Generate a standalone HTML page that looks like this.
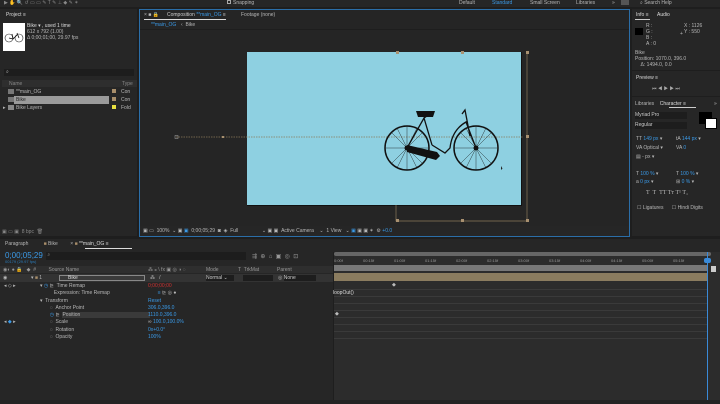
<!DOCTYPE html><html><head><style>
*{margin:0;padding:0;box-sizing:border-box}
body{width:720px;height:404px;background:#1e1e1e;position:relative;overflow:hidden;font-family:"Liberation Sans",sans-serif;font-size:5px;color:#b8b8b8}
.a{position:absolute}
.p{position:absolute;background:#262626}
.b{color:#3a9ae8}
.ln{position:absolute;height:1px;background:#3a3a3a}
</style></head><body>
<!-- top toolbar -->
<div class="a" style="left:0;top:0;width:720px;height:7px;background:#262626"></div>
<div class="a" style="left:4;top:0;left:4px;width:170px;height:6px;color:#888;font-size:5px">▶ ✋ 🔍 ↺ ▭ ▭ ✎ T ✎ ⊥ ◆ ✎ ✶</div>
<div class="a" style="left:227px;top:0;width:4px;height:4px;border:1px solid #aaa"></div>
<div class="a" style="left:233px;top:0">Snapping</div>
<div class="a" style="left:459px;top:0">Default</div>
<div class="a b" style="left:492px;top:0">Standard</div>
<div class="a" style="left:530px;top:0">Small Screen</div>
<div class="a" style="left:576px;top:0">Libraries</div>
<div class="a" style="left:612px;top:0">»</div>
<div class="a" style="left:621px;top:0;width:8px;height:5px;background:#555"></div>
<div class="a" style="left:640px;top:0">⌕ Search Help</div>

<!-- project panel -->
<div class="p" style="left:0;top:9px;width:137px;height:227px"></div>
<div class="a" style="left:6px;top:12px;color:#ddd">Project ≡</div>
<div class="a" style="left:3px;top:23px;width:22px;height:28px;background:#fff"></div>
<svg class="a" style="left:4px;top:31px" width="20" height="12" viewBox="0 0 20 12"><circle cx="5" cy="7" r="4" fill="none" stroke="#222" stroke-width=".6"/><circle cx="15" cy="7" r="4" fill="none" stroke="#222" stroke-width=".6"/><path d="M5 7L9 8L13 4M8 3L9 8M13 2L15 7" stroke="#111" stroke-width=".8" fill="none"/></svg>
<div class="a" style="left:27px;top:23px;color:#ddd">Bike ▾ , used 1 time</div>
<div class="a" style="left:27px;top:29px">612 x 792 (1.00)</div>
<div class="a" style="left:27px;top:35px">Δ 0;00;01;00, 29.97 fps</div>
<div class="a" style="left:4px;top:69px;width:130px;height:7px;background:#1d1d1d"></div>
<div class="a" style="left:6px;top:69px">⌕</div>
<div class="a" style="left:2px;top:80px;width:135px;height:7px;background:#2e2e2e"></div>
<div class="a" style="left:9px;top:81px;color:#888">Name</div>
<div class="a" style="left:122px;top:81px;color:#888">Type</div>
<div class="a" style="left:8px;top:89px;width:6px;height:5px;background:#777"></div><div class="a" style="left:16px;top:89px">**main_OG</div>
<div class="a" style="left:112px;top:89px;width:4px;height:4px;background:#a88e6a"></div><div class="a" style="left:121px;top:89px">Con</div>
<div class="a" style="left:14px;top:96px;width:95px;height:8px;background:#9a9a9a"></div>
<div class="a" style="left:8px;top:97px;width:6px;height:5px;background:#777"></div><div class="a" style="left:16px;top:97px;color:#222">Bike</div>
<div class="a" style="left:112px;top:97px;width:4px;height:4px;background:#a88e6a"></div><div class="a" style="left:121px;top:97px">Con</div>
<div class="a" style="left:3px;top:105px">▸</div><div class="a" style="left:8px;top:105px;width:6px;height:5px;background:#888"></div><div class="a" style="left:16px;top:105px">Bike Layers</div>
<div class="a" style="left:112px;top:105px;width:4px;height:4px;background:#e8e040"></div><div class="a" style="left:121px;top:105px">Fold</div>
<div class="a" style="left:2px;top:229px;color:#888">▣ ▭ ▣ &nbsp;8 bpc &nbsp;🗑</div>

<!-- comp panel -->
<div class="a" style="left:139px;top:9px;width:491px;height:228px;background:#252525;border:1px solid #2b6ea8"></div>
<div class="a" style="left:144px;top:12px">× ■ 🔒</div>
<div class="a" style="left:167px;top:12px;color:#ccc">Composition <span class="b">**main_OG</span> ≡</div>
<div class="a" style="left:144px;top:19px;width:82px;height:1px;background:#ddd"></div>
<div class="a" style="left:241px;top:12px">Footage (none)</div>
<div class="a b" style="left:151px;top:22px">**main_OG</div><div class="a" style="left:181px;top:22px">‹ &nbsp;Bike</div>
<div class="a" style="left:140px;top:29px;width:489px;height:1px;background:#1e1e1e"></div>
<!-- canvas -->
<div class="a" style="left:247px;top:52px;width:275px;height:154px;background:#8ed0e1;border-right:1px solid #111;border-bottom:1px solid #111"></div>
<svg class="a" style="left:140px;top:40px" width="400" height="190" viewBox="140 40 400 190">
<g fill="none" stroke="#8a7a5a" stroke-width=".7">
<path d="M176 137H523" stroke-dasharray="1.5 1"/>
<path d="M527 52V221H396V205"/>
</g>
<g fill="#a89070"><rect x="396" y="51" width="3" height="3"/><rect x="461" y="51" width="3" height="3"/><rect x="526" y="51" width="3" height="3"/><rect x="526" y="135" width="3" height="3"/><rect x="526" y="219" width="3" height="3"/><rect x="461" y="219" width="3" height="3"/><rect x="396" y="219" width="3" height="3"/><rect x="222" y="136" width="2" height="2"/></g>
<rect x="175" y="135.5" width="3" height="3" fill="none" stroke="#aaa" stroke-width=".5"/>
<g stroke="#111" fill="none">
<circle cx="407" cy="148" r="22" stroke-width="1.5"/><circle cx="476" cy="148" r="22" stroke-width="1.5"/>
<g stroke-width=".4"><path d="M385 148H429M407 126V170M391 132L423 164M423 132L391 164M454 148H498M476 126V170M460 132L492 164M492 132L460 164M397 128L417 168M417 128L397 168M466 128L486 168M486 128L466 168"/></g>
<path d="M407 148L424 118L432 145M424 118L430 114M432 145L445 153L450 148Q452 130 466 122L476 148M462 114L465 110L470 136" stroke-width="1.3"/>
</g>
<path d="M416 111H435L433 117H418Z" fill="#111"/>
<path d="M407 145L437 152L440 156L436 160L407 152Z" fill="#111"/>
<circle cx="407" cy="148" r="2.5" fill="#111"/><circle cx="476" cy="148" r="2.5" fill="#111"/>
<path d="M501 166l0 4l1.5-1.5z" fill="#222"/>
</svg>
<div class="a" style="left:140px;top:226px;width:489px;height:10px;background:#262626"></div>
<div class="a" style="left:143px;top:228px">▣ ▭ &nbsp;100% &nbsp;⌄ ▣ <span class="b">▣</span> &nbsp;0;00;05;29 &nbsp;◙ &nbsp;◈ &nbsp;Full &nbsp;&nbsp;&nbsp;&nbsp;&nbsp;&nbsp;&nbsp;&nbsp;&nbsp;&nbsp;&nbsp;&nbsp;&nbsp;&nbsp;&nbsp;&nbsp;⌄ ▣ ▣ &nbsp;Active Camera &nbsp;&nbsp;&nbsp;⌄ &nbsp;1 View &nbsp;&nbsp;⌄ <span class="b">▣</span> ▣ ▣ ✶ &nbsp;⚙ <span class="b">+0.0</span></div>

<!-- right panel -->
<div class="p" style="left:632px;top:9px;width:88px;height:227px"></div>
<div class="a" style="left:636px;top:12px;color:#ddd">Info ≡ &nbsp;&nbsp;&nbsp;&nbsp;&nbsp;Audio</div>
<div class="a" style="left:635px;top:19px;width:15px;height:1px;background:#ccc"></div>
<div class="a" style="left:635px;top:28px;width:8px;height:7px;background:#000"></div>
<div class="a" style="left:646px;top:23px;line-height:6px">R :<br>G :<br>B :<br>A : 0</div>
<div class="a" style="left:684px;top:23px;line-height:6px">X : 1126<br>Y : 550</div>
<div class="a" style="left:680px;top:31px">+</div>
<div class="a" style="left:635px;top:50px;line-height:6px">Bike<br>Position: 1070.0, 396.0<br>&nbsp;&nbsp;&nbsp;&nbsp;Δ: 1494.0, 0.0</div>
<div class="a" style="left:632px;top:70px;width:88px;height:1px;background:#1e1e1e"></div>
<div class="a" style="left:636px;top:75px;color:#ddd">Preview ≡</div>
<div class="a" style="left:652px;top:86px;color:#aaa">⏮ ◀ ▶ ▶ ⏭</div>
<div class="a" style="left:632px;top:96px;width:88px;height:1px;background:#1e1e1e"></div>
<div class="a" style="left:635px;top:101px">Libraries &nbsp;&nbsp;&nbsp;<span style="color:#ddd">Character ≡</span></div>
<div class="a" style="left:669px;top:107px;width:27px;height:1px;background:#ccc"></div>
<div class="a" style="left:714px;top:101px">»</div>
<div class="a" style="left:635px;top:112px;width:52px;height:7px;background:#1d1d1d;color:#ccc">Myriad Pro</div>
<div class="a" style="left:635px;top:122px;width:52px;height:7px;background:#1d1d1d;color:#ccc">Regular</div>
<div class="a" style="left:699px;top:112px;width:13px;height:12px;background:#000"></div>
<div class="a" style="left:705px;top:118px;width:12px;height:11px;background:#fff;border:1px solid #000"></div>
<div class="a" style="left:636px;top:135px;line-height:9px">TT <span class="b">149 px</span> ▾<br>VA Optical ▾<br>▤ - px ▾</div>
<div class="a" style="left:676px;top:135px;line-height:9px">tA <span class="b">144 px</span> ▾<br>VA <span class="b">0</span></div>
<div class="a" style="left:636px;top:170px;line-height:8px">T <span class="b">100 %</span> ▾<br>a <span class="b">0 px</span> ▾</div>
<div class="a" style="left:676px;top:170px;line-height:8px">T <span class="b">100 %</span> ▾<br>⊞ <span class="b">0 %</span> ▾</div>
<div class="a" style="left:646px;top:190px;font-family:'Liberation Serif';font-size:6px">T &nbsp;T &nbsp;TT Tт T¹ T₁</div>
<div class="a" style="left:637px;top:205px">☐ Ligatures &nbsp;&nbsp;&nbsp;&nbsp;&nbsp;☐ Hindi Digits</div>

<!-- timeline -->
<div class="p" style="left:0;top:239px;width:720px;height:165px"></div>
<div class="a" style="left:5px;top:241px">Paragraph &nbsp;&nbsp;&nbsp;&nbsp;&nbsp;&nbsp;&nbsp;&nbsp;&nbsp;&nbsp;<span style="color:#a88e6a">■</span> Bike &nbsp;&nbsp;&nbsp;&nbsp;&nbsp;&nbsp;&nbsp;&nbsp;× <span style="color:#a88e6a">■</span> <span style="color:#ddd">**main_OG ≡</span></div>
<div class="a" style="left:85px;top:248px;width:47px;height:1px;background:#ddd"></div>
<div class="a b" style="left:5px;top:251px;font-size:8px">0;00;05;29</div>
<div class="a" style="left:5px;top:259px;font-size:4px;color:#2a7ab8">00179 (29.97 fps)</div>
<div class="a" style="left:46px;top:252px;width:200px;height:8px;background:#1d1d1d;color:#888">&nbsp;⌕</div>
<div class="a" style="left:252px;top:253px;color:#999;font-size:6px">⇶ &nbsp;⊕ &nbsp;⌂ &nbsp;▣ &nbsp;◎ &nbsp;⊡</div>
<div class="a" style="left:0;top:266px;width:333px;height:7px;background:#2e2e2e"></div>
<div class="a" style="left:3px;top:267px;color:#999">◉◐ ● 🔒 &nbsp;&nbsp;◆ &nbsp;# &nbsp;&nbsp;&nbsp;&nbsp;&nbsp;&nbsp;&nbsp;&nbsp;Source Name</div>
<div class="a" style="left:148px;top:267px;color:#999">⁂ ⁎ \ fx ▣ ◎ ◑ ◌</div>
<div class="a" style="left:206px;top:267px;color:#999">Mode</div><div class="a" style="left:238px;top:267px;color:#999">T &nbsp;TrkMat</div><div class="a" style="left:277px;top:267px;color:#999">Parent</div>
<div class="a" style="left:0;top:274px;width:333px;height:8px;background:#333"></div>
<div class="a" style="left:3px;top:275px">◉ &nbsp;&nbsp;&nbsp;&nbsp;&nbsp;&nbsp;&nbsp;&nbsp;&nbsp;&nbsp;&nbsp;&nbsp;&nbsp;&nbsp;&nbsp;&nbsp;▾ <span style="color:#a88e6a">■</span> 1</div>
<div class="a" style="left:59px;top:275px;width:86px;height:6px;border:1px solid #888;background:#3a3a3a;padding-left:8px;color:#ddd;line-height:4px">Bike</div>
<div class="a" style="left:150px;top:275px">⁂ &nbsp;&nbsp;/</div>
<div class="a" style="left:206px;top:275px;width:28px;height:6px;background:#1d1d1d;color:#ccc">Normal ⌄</div>
<div class="a" style="left:243px;top:275px;width:30px;height:6px;background:#1d1d1d"></div>
<div class="a" style="left:278px;top:275px">◎ <span style="background:#1d1d1d;padding-right:20px;color:#ccc">None</span></div>
<div class="a" style="left:4px;top:283px;line-height:7.3px">◂ ◇ ▸<br><br><br><br><br>◂ <span class="b">◆</span> ▸</div>
<div class="a" style="left:40px;top:283px;line-height:7.3px">▾ <span class="b">◷</span> ⊵ &nbsp;Time Remap<br>&nbsp;&nbsp;&nbsp;&nbsp;&nbsp;&nbsp;&nbsp;&nbsp;&nbsp;&nbsp;Expression: Time Remap<br>▾ &nbsp;Transform<br>&nbsp;&nbsp;&nbsp;&nbsp;&nbsp;&nbsp;&nbsp;◌ &nbsp;Anchor Point<br>&nbsp;&nbsp;&nbsp;&nbsp;&nbsp;&nbsp;&nbsp;<span class="b">◷</span> ⊵ &nbsp;<span style="background:#3a3a3a;padding-right:70px">Position</span><br>&nbsp;&nbsp;&nbsp;&nbsp;&nbsp;&nbsp;&nbsp;◌ &nbsp;Scale<br>&nbsp;&nbsp;&nbsp;&nbsp;&nbsp;&nbsp;&nbsp;◌ &nbsp;Rotation<br>&nbsp;&nbsp;&nbsp;&nbsp;&nbsp;&nbsp;&nbsp;◌ &nbsp;Opacity</div>
<div class="a" style="left:148px;top:283px;line-height:7.3px"><span style="color:#d03030">0;00;00;00</span><br>&nbsp;&nbsp;&nbsp;&nbsp;&nbsp;&nbsp;&nbsp;<span class="b">≡</span> ⊵ ◎ ●<br><span class="b">Reset</span><br><span class="b">306.0,396.0</span><br><span class="b">1110.0,396.0</span><br>∞ <span class="b">100.0,100.0%</span><br><span class="b">0x+0.0°</span><br><span class="b">100%</span></div>
<!-- track area -->
<div class="a" style="left:333px;top:252px;width:387px;height:150px;background:#2c2c2c;border-left:1px solid #1e1e1e"></div>
<div class="a" style="left:334px;top:252px;width:377px;height:4px;background:#666;border-radius:2px"></div>
<div class="a" style="left:334px;top:258px;width:380px;font-size:4px;color:#999;word-spacing:0">
<span class="a" style="left:0">0:00f</span><span class="a" style="left:29px">00:15f</span><span class="a" style="left:60px">01:00f</span><span class="a" style="left:91px">01:15f</span><span class="a" style="left:122px">02:00f</span><span class="a" style="left:153px">02:15f</span><span class="a" style="left:184px">03:00f</span><span class="a" style="left:215px">03:15f</span><span class="a" style="left:246px">04:00f</span><span class="a" style="left:277px">04:15f</span><span class="a" style="left:308px">05:00f</span><span class="a" style="left:339px">05:15f</span></div>
<div class="a" style="left:334px;top:265px;width:374px;height:6px;background:#787878"></div>
<div class="a" style="left:334px;top:273px;width:374px;height:8px;background:#8b7c5f"></div>
<div class="ln" style="left:334px;top:289px;width:374px"></div>
<div class="ln" style="left:334px;top:296px;width:374px"></div>
<div class="ln" style="left:334px;top:303px;width:374px"></div>
<div class="ln" style="left:334px;top:310px;width:374px"></div>
<div class="ln" style="left:334px;top:317px;width:374px"></div>
<div class="ln" style="left:334px;top:324px;width:374px"></div>
<div class="ln" style="left:334px;top:331px;width:374px"></div>
<div class="ln" style="left:334px;top:338px;width:374px"></div>
<div class="a" style="left:333px;top:290px;color:#ddd">loopOut()</div>
<div class="a" style="left:392px;top:282px;color:#bbb">◆</div>
<div class="a" style="left:335px;top:311px;color:#bbb">◆</div>
<div class="a" style="left:707px;top:252px;width:1px;height:148px;background:#3a8ad8"></div>
<div class="a" style="left:704px;top:258px;width:7px;height:5px;background:#3a8ad8;border-radius:2px"></div>
<div class="a" style="left:711px;top:266px;width:5px;height:6px;background:#ccc"></div>
<div class="a" style="left:0;top:400px;width:720px;height:4px;background:#232323"></div>
</body></html>
